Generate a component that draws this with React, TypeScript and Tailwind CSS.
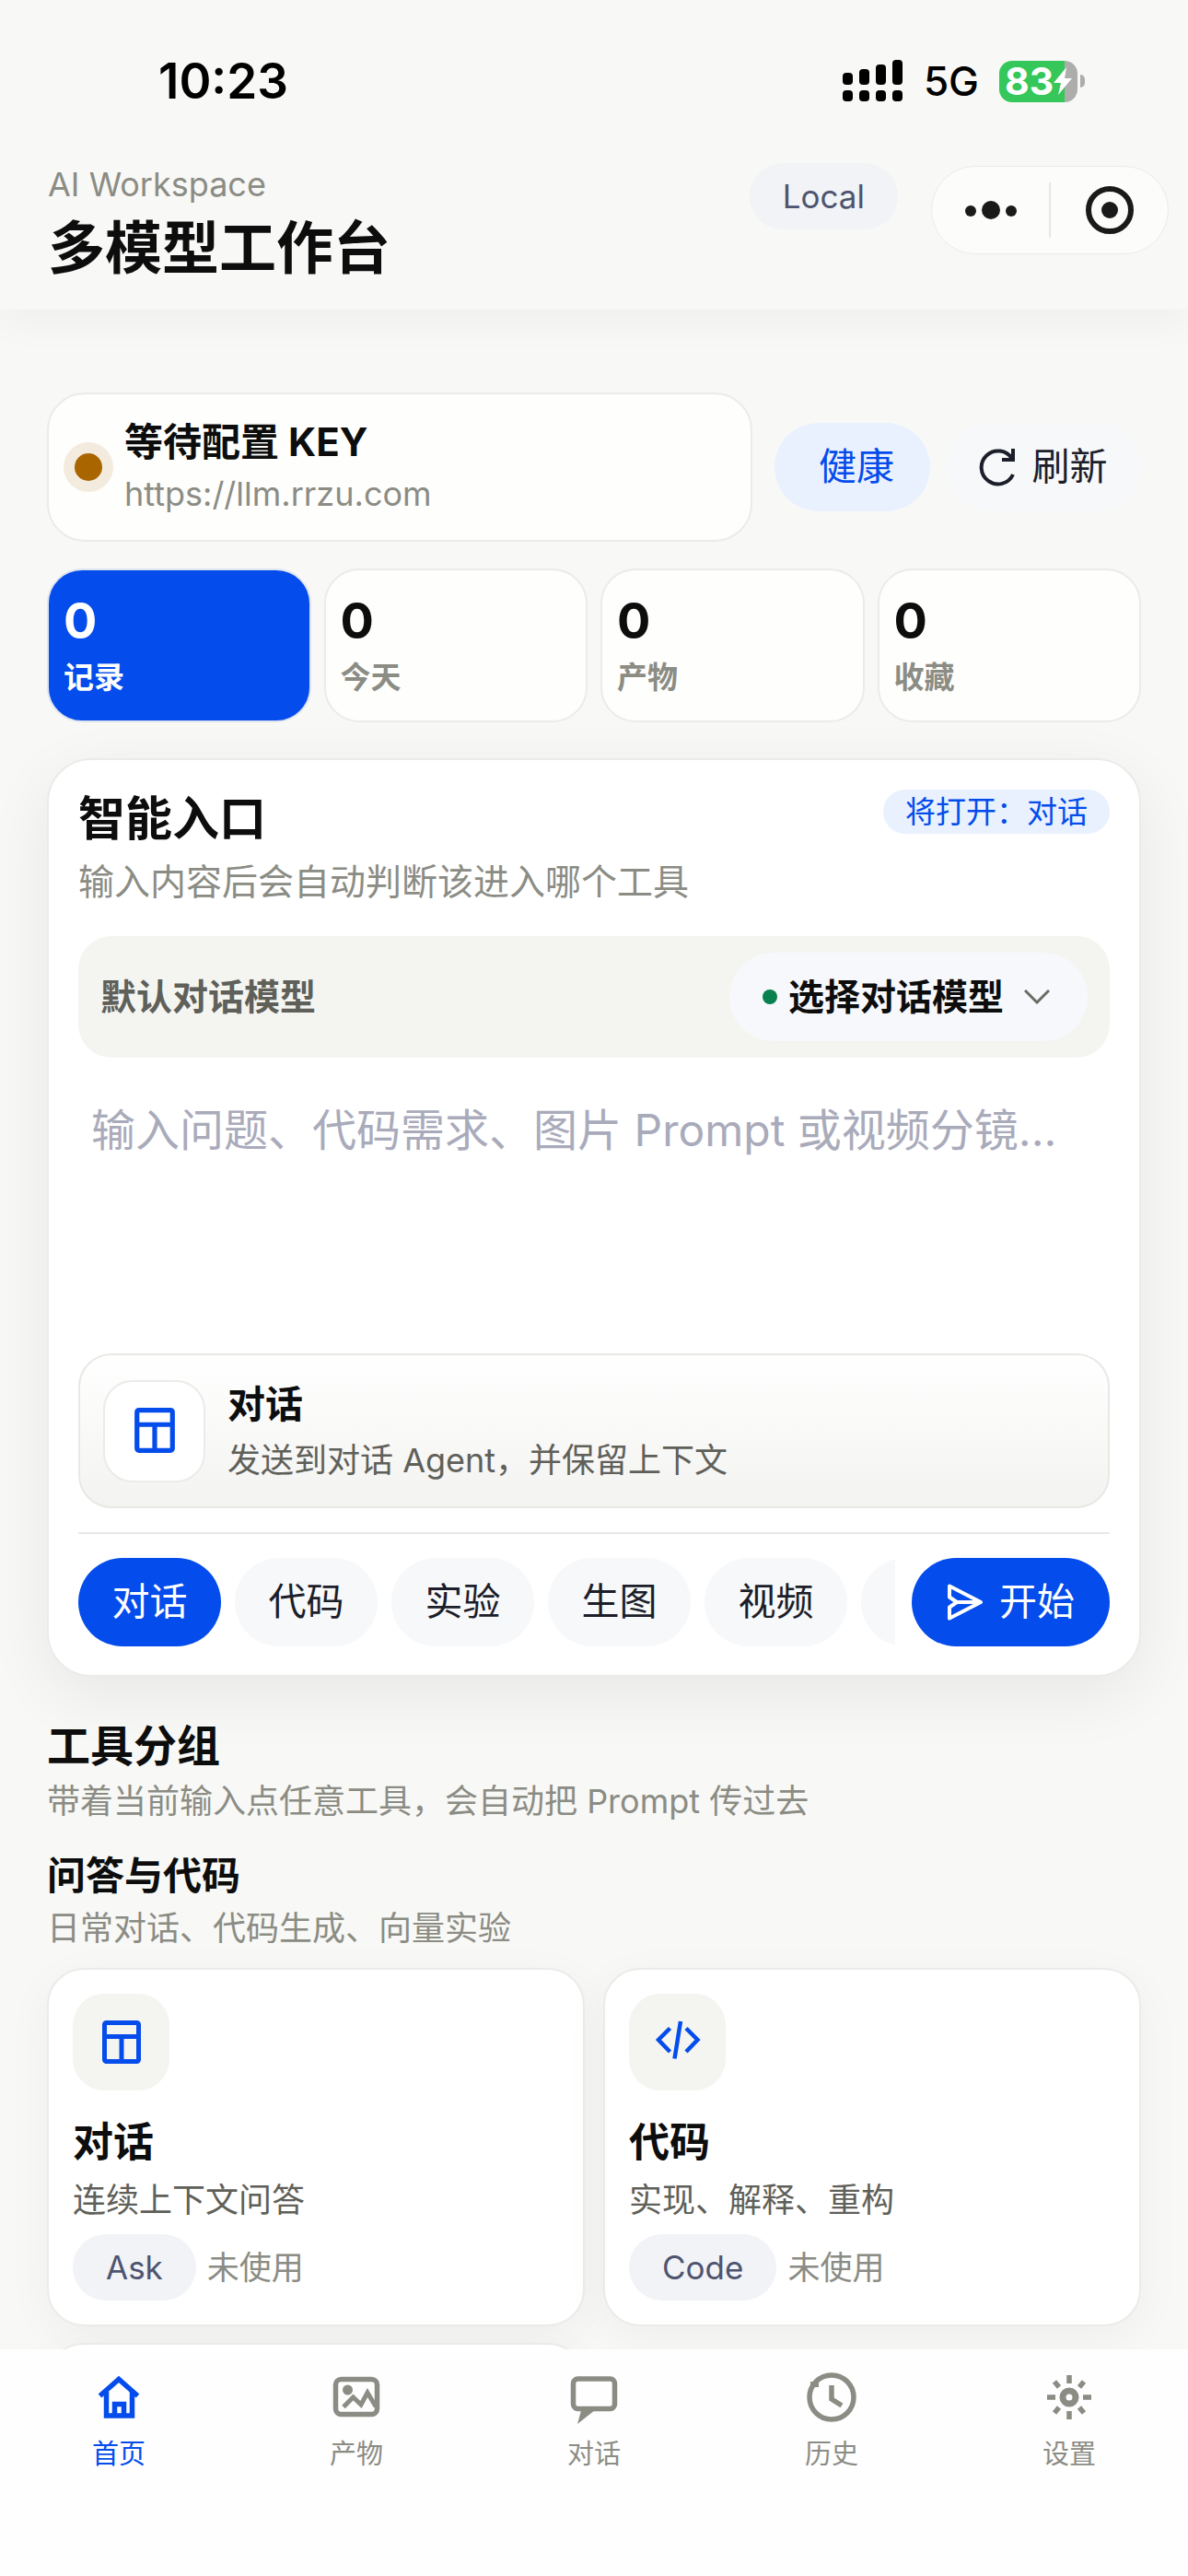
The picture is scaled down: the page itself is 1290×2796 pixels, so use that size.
import React from 'react';

const Glyph: React.FC<{ className?: string; box?: string; children: React.ReactNode }> = ({
  className = '',
  box = '0 0 48 48',
  children,
}) => (
  <svg viewBox={box} className={`overflow-visible ${className}`} fill="none" stroke="currentColor" aria-hidden="true">
    {children}
  </svg>
);

const LayoutIcon = ({ className }: { className: string }) => (
  <Glyph className={className}>
    <rect x="5.500" y="2.500" width="37" height="42" rx="2" strokeWidth="5" />
    <path d="M5 17.500h38M24 18v27" strokeWidth="5" />
  </Glyph>
);

const CodeIcon = ({ className }: { className: string }) => (
  <Glyph className={className}>
    <path d="M15.500 8.500L3 21l12.500 13M33 8.500L45.500 21 33 34M27 1L20.500 41.500" strokeWidth="4.500" />
  </Glyph>
);

const RefreshIcon = ({ className }: { className: string }) => (
  <Glyph className={className} box="0 0 40 40">
    <path d="M36 28A18 18 0 1 1 35 11M36 0v12H24" strokeWidth="4" />
  </Glyph>
);

const SendIcon = ({ className }: { className: string }) => (
  <Glyph className={className} box="0 0 40 40">
    <path
      d="M3 2.500L37 20 3 37.500V25.500L11 20 3 14.500zM11 20h25"
      strokeWidth="4"
      strokeLinejoin="round"
    />
  </Glyph>
);

const navIcons = {
  home: (
    <>
      <path d="M5.500 24.500L26 6.500l20.500 18" strokeWidth="5.500" />
      <path d="M12.500 20v26h28V20M21.500 46V33.500h10V46" strokeWidth="5.500" />
    </>
  ),
  image: (
    <>
      <rect x="3.500" y="6.500" width="45" height="38" rx="6" strokeWidth="5.500" />
      <circle cx="16.500" cy="18" r="5.500" fill="currentColor" stroke="none" />
      <path d="M12 36.500L22.500 26l8.500 8 7-13 9 15" strokeWidth="5" />
    </>
  ),
  chat: (
    <>
      <rect x="3.500" y="6" width="45" height="32.500" rx="5" strokeWidth="5.500" />
      <path d="M13 37L8 55l19-15-3-4z" fill="currentColor" stroke="none" />
    </>
  ),
  clock: (
    <>
      <circle cx="26" cy="26" r="24" strokeWidth="5.500" />
      <path d="M3 9h9v6H3z" fill="currentColor" stroke="none" />
      <path d="M26 13v15l11 7" strokeWidth="5.500" />
    </>
  ),
  gear: (
    <>
      <circle cx="26" cy="26" r="7" strokeWidth="7" />
      <path
        d="M26 2v9M26 41v9M2 26h9M41 26h9M10 9l5 6M37 37l5 6M42 9l-5 6M15 37l-5 6"
        strokeWidth="5.500"
      />
    </>
  ),
};

const stats = [
  { label: '记录', value: 0, active: true },
  { label: '今天', value: 0 },
  { label: '产物', value: 0 },
  { label: '收藏', value: 0 },
];

const modes = ['对话', '代码', '实验', '生图', '视频'];

const tools = [
  { title: '对话', desc: '连续上下文问答', tag: 'Ask', icon: LayoutIcon },
  { title: '代码', desc: '实现、解释、重构', tag: 'Code', icon: CodeIcon },
];

const tabs = [
  { label: '首页', icon: navIcons.home, active: true },
  { label: '产物', icon: navIcons.image },
  { label: '对话', icon: navIcons.chat },
  { label: '历史', icon: navIcons.clock },
  { label: '设置', icon: navIcons.gear },
];

const StatusBar = () => (
  <div className="flex h-[120px] items-center justify-between pt-[56px] pr-[112px] pl-[172px]">
    <span className="text-[53px] leading-[66px] font-semibold text-black">10:23</span>
    <div className="flex items-center">
      <svg viewBox="0 0 66 46" className="h-[46px] w-[66px]" aria-hidden="true">
        <rect x="0" y="14" width="11" height="13" rx="4" />
        <rect x="18" y="10" width="11" height="17" rx="4" />
        <rect x="36" y="5" width="11" height="22" rx="4" />
        <rect x="54" y="0" width="11" height="27" rx="4" />
        <rect x="0" y="33" width="11" height="12" rx="4" />
        <rect x="18" y="33" width="11" height="12" rx="4" />
        <rect x="36" y="33" width="11" height="12" rx="4" />
        <rect x="54" y="33" width="11" height="12" rx="4" />
      </svg>
      <span className="ml-[22px] text-[44px] leading-[56px] font-medium text-black">5G</span>
      <div className="ml-[22px] flex items-center gap-[3px]">
        <div className="flex h-[45px] w-[85px] items-center rounded-[14px] bg-[linear-gradient(90deg,#35c759_84%,#adadab_84%)] pl-[6px]">
          <span className="text-[41px] leading-[45px] font-bold text-white">83</span>
          <svg viewBox="0 0 20 30" className="h-[30px] w-[20px] shrink-0 fill-white" aria-hidden="true">
            <path d="M14 0L0 17h8L5 30 20 12h-8z" />
          </svg>
        </div>
        <span className="h-[14px] w-[5px] rounded-r-full bg-[#adadab]" />
      </div>
    </div>
  </div>
);

const Header = () => (
  <header className="relative z-10 h-[336px] shrink-0 bg-[#f8f8f6] shadow-[0_14px_40px_rgba(0,0,0,0.04)]">
    <StatusBar />
    <div className="flex items-start justify-between pt-[57px] pr-[21px] pl-[52px]">
      <div>
        <p className="text-[36px] leading-[46px] text-[#8b8c84]">AI Workspace</p>
        <h1 className="mt-[8px] text-[62px] leading-[78px] font-bold">多模型工作台</h1>
      </div>
      <div className="flex items-start gap-[36px]">
        <span className="h-[72px] rounded-full bg-[#f1f3f6] px-[36px] text-[35px] leading-[72px] text-[#4e5470]">
          Local
        </span>
        <div className="mt-[3px] flex h-[96px] w-[258px] items-center divide-x-2 divide-[#e6e6e4] rounded-full border border-[#ebebe9] bg-[#fcfcfa] text-[#1a1a1a]">
          <button type="button" aria-label="更多" className="flex h-[60px] flex-1 items-center justify-center">
            <svg viewBox="0 0 58 20" className="h-[20px] w-[58px] fill-current">
              <circle cx="7" cy="11" r="6" />
              <circle cx="29" cy="10" r="10" />
              <circle cx="51" cy="11" r="6" />
            </svg>
          </button>
          <button type="button" aria-label="关闭" className="flex h-[60px] flex-1 items-center justify-center">
            <svg viewBox="0 0 52 52" className="size-[52px]">
              <circle cx="26" cy="26" r="23" fill="none" stroke="currentColor" strokeWidth="6" />
              <circle cx="26" cy="26" r="9" fill="currentColor" />
            </svg>
          </button>
        </div>
      </div>
    </div>
  </header>
);

const StatusRow = () => (
  <section className="flex items-center">
    <div className="flex h-[162px] flex-1 items-center rounded-[41px] border-2 border-[#ebebe9] bg-[#fefefd] pl-[16px]">
      <span className="flex size-[54px] items-center justify-center rounded-full bg-[#f4ebdf]">
        <span className="size-[30px] rounded-full bg-[#a86500]" />
      </span>
      <div className="ml-[12px]">
        <p className="text-[42px] leading-[56px] font-bold">等待配置 KEY</p>
        <p className="mt-[2px] text-[36px] leading-[52px] text-[#8b8c84]">https://llm.rrzu.com</p>
      </div>
    </div>
    <button
      type="button"
      className="ml-[24px] h-[96px] w-[169px] rounded-full bg-[#e9f1ff] pl-[9px] text-[41px] text-[#044ceb]"
    >
      健康
    </button>
    <button
      type="button"
      className="ml-[17px] flex h-[96px] w-[212px] items-center justify-center gap-[17px] rounded-full bg-[#f7f8fa] text-[41px] text-[#1c1e2a]"
    >
      <RefreshIcon className="size-[40px]" />
      刷新
    </button>
  </section>
);

const Stats = () => (
  <section className="mt-[29px] grid grid-cols-4 gap-[14px]">
    {stats.map((s) => (
      <div
        key={s.label}
        className={`h-[167px] rounded-[38px] border-2 pt-[22px] pl-[16px] ${
          s.active ? 'border-[#dfe4ee] bg-[#044ceb] text-white' : 'border-[#ebebe9] bg-[#fefefd]'
        }`}
      >
        <p className="text-[54px] leading-[66px] font-bold">{s.value}</p>
        <p className={`mt-[6px] text-[33px] leading-[44px] font-semibold ${s.active ? '' : 'text-[#8b8c84]'}`}>
          {s.label}
        </p>
      </div>
    ))}
  </section>
);

const Composer = () => (
  <section className="mt-[39px] rounded-[48px] border-2 border-[#ebebe9] bg-white px-[32px] pt-[32px] pb-[31px] shadow-[0_20px_70px_rgba(0,0,0,0.07)]">
    <div className="flex items-start justify-between">
      <h2 className="text-[51px] leading-[64px] font-bold">智能入口</h2>
      <span className="rounded-full bg-[#e9f1ff] px-[24px] text-[33px] leading-[48px] text-[#044ceb]">
        将打开：对话
      </span>
    </div>
    <p className="mt-[10px] text-[39px] leading-[52px] text-[#8b8c84]">输入内容后会自动判断该进入哪个工具</p>

    <div className="mt-[33px] flex h-[132px] items-center justify-between rounded-[36px] bg-[#f4f5f1] px-[24px]">
      <span id="model-label" className="text-[39px] font-bold text-[#5f6059]">
        默认对话模型
      </span>
      <button
        type="button"
        aria-describedby="model-label"
        className="flex h-[96px] items-center rounded-full bg-[#f7f8fb] pr-[41px] pl-[36px]"
      >
        <span className="size-[16px] rounded-full bg-[#08804f]" />
        <span className="ml-[12px] text-[39px] font-bold">选择对话模型</span>
        <svg viewBox="0 0 28 16" className="ml-[22px] h-[16px] w-[28px]" fill="none" stroke="#6b6b66" strokeWidth="3">
          <path d="M1 1l13 13L27 1" />
        </svg>
      </button>
    </div>

    <textarea
      aria-label="输入内容"
      placeholder="输入问题、代码需求、图片 Prompt 或视频分镜..."
      className="mt-[45px] block h-[276px] w-full resize-none bg-transparent px-[14px] text-[48px] leading-[68px] outline-none placeholder:text-[#a9abbb]"
    />

    <div className="flex h-[168px] items-center rounded-[36px] border-2 border-[#e8e8e5] bg-linear-to-b from-white to-[#f3f3f1] pl-[25px]">
      <span className="flex size-[111px] items-center justify-center rounded-[32px] border-2 border-[#ebebe9] bg-white text-[#044ceb]">
        <LayoutIcon className="size-[50px]" />
      </span>
      <div className="ml-[24px]">
        <p className="text-[41px] leading-[56px] font-bold">对话</p>
        <p className="mt-[8px] text-[36px] leading-[50px] text-[#5f6059]">发送到对话 Agent，并保留上下文</p>
      </div>
    </div>

    <div className="mt-[26px] flex gap-[18px] border-t-2 border-[#e8e8e6] pt-[26px]">
      <div className="flex min-w-0 flex-1 gap-[15px] overflow-x-auto [scrollbar-width:none]">
        {modes.map((m, i) => (
          <button
            key={m}
            type="button"
            className={`h-[96px] w-[155px] shrink-0 rounded-full text-[41px] ${
              i === 0 ? 'bg-[#044ceb] text-white' : 'bg-[#f7f8fa] text-[#1c1e2a]'
            }`}
          >
            {m}
          </button>
        ))}
        <button type="button" aria-label="更多工具" className="h-[96px] w-[155px] shrink-0 rounded-full bg-[#f7f8fa]" />
      </div>
      <button
        type="button"
        className="flex h-[96px] w-[215px] items-center justify-center gap-[17px] rounded-full bg-[#044ceb] text-[41px] text-white"
      >
        <SendIcon className="size-[40px]" />
        开始
      </button>
    </div>
  </section>
);

const cardClass =
  'rounded-[40px] border-2 border-[#ebebe9] bg-white p-[26px] shadow-[0_12px_50px_rgba(0,0,0,0.045)]';

const ToolGroups = () => (
  <section className="mt-[45px]">
    <h2 className="text-[47px] leading-[60px] font-bold">工具分组</h2>
    <p className="mt-[5px] text-[36px] leading-[50px] text-[#8b8c84]">带着当前输入点任意工具，会自动把 Prompt 传过去</p>
    <h3 className="mt-[28px] text-[42px] leading-[56px] font-bold">问答与代码</h3>
    <p className="mt-[4px] text-[36px] leading-[50px] text-[#8b8c84]">日常对话、代码生成、向量实验</p>
    <div className="mt-[18px] grid grid-cols-2 gap-x-[20px] gap-y-[18px]">
      {tools.map(({ title, desc, tag, icon: Icon }) => (
        <article key={title} className={cardClass}>
          <span className="flex size-[105px] items-center justify-center rounded-[34px] bg-[#f4f5f1] text-[#044ceb]">
            <Icon className="size-[48px]" />
          </span>
          <h4 className="mt-[26px] text-[44px] leading-[60px] font-bold">{title}</h4>
          <p className="mt-[8px] text-[36px] leading-[50px] text-[#5f6059]">{desc}</p>
          <div className="mt-[12px] flex items-center gap-[12px]">
            <span className="rounded-full bg-[#f1f3f6] px-[36px] text-[35px] leading-[72px] text-[#4e5470]">{tag}</span>
            <span className="text-[35px] text-[#8b8c84]">未使用</span>
          </div>
        </article>
      ))}
      <article className={cardClass}>
        <span className="block size-[105px] rounded-[34px] bg-[#f4f5f1]" />
      </article>
    </div>
  </section>
);

const TabBar = () => (
  <nav className="relative z-10 grid h-[246px] shrink-0 grid-cols-5 items-start bg-[#fefefe] pt-[26px]">
    {tabs.map((t) => (
      <a
        key={t.label}
        href="#"
        className={`flex flex-col items-center ${t.active ? 'text-[#044ceb]' : 'text-[#8b8c84]'}`}
      >
        <Glyph className="size-[52px]" box="0 0 52 52">
          {t.icon}
        </Glyph>
        <span className="mt-[16px] text-[29px] leading-[40px]">{t.label}</span>
      </a>
    ))}
  </nav>
);

const App: React.FC = () => {
  return (
    <div className="flex h-screen flex-col bg-[#f8f8f6] font-['Inter','Noto_Sans_CJK_SC',sans-serif] text-[#0d0d0d]">
      <Header />
      <main className="min-h-0 flex-1 overflow-y-auto px-[51px] pt-[90px] [scrollbar-width:none]">
        <StatusRow />
        <Stats />
        <Composer />
        <ToolGroups />
      </main>
      <TabBar />
    </div>
  );
};

export default App;
